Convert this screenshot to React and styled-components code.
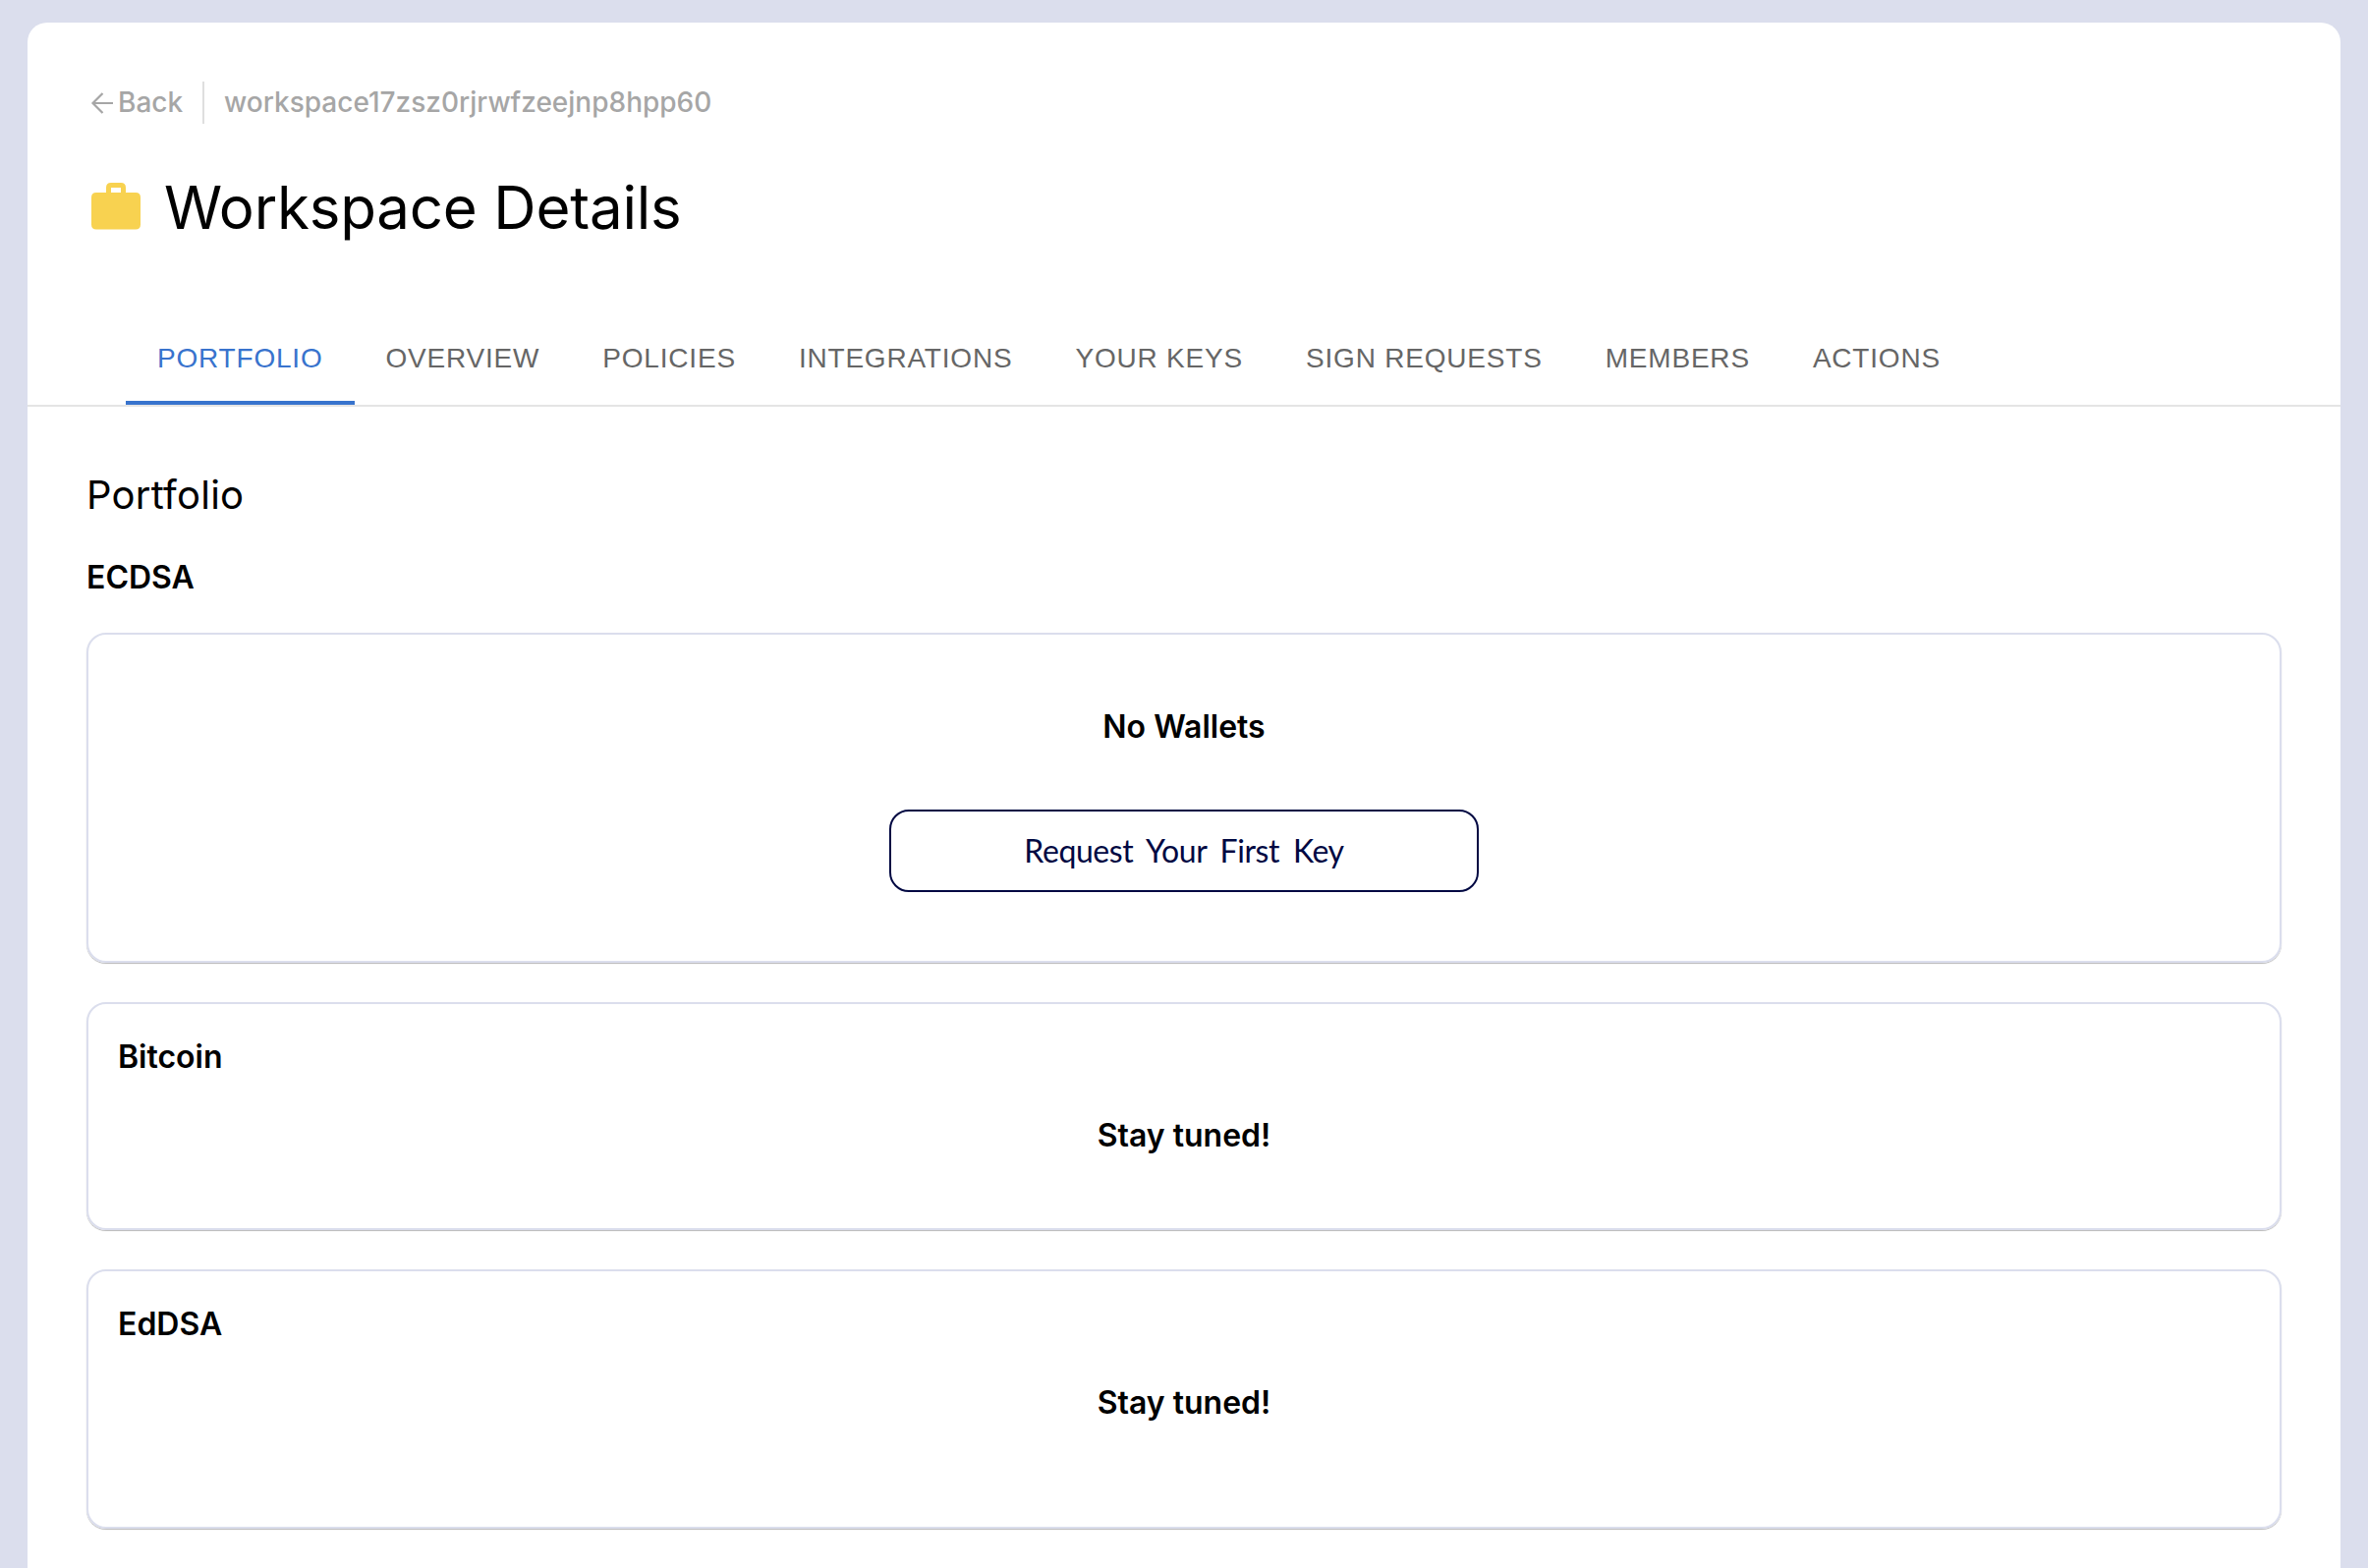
import React from "react";
import styled, { createGlobalStyle } from "styled-components";

const GlobalStyle = createGlobalStyle`
  * { box-sizing: border-box; margin: 0; }
  body {
    margin: 0;
    background: #dbdeed;
    color: #000;
    font-family: Inter, sans-serif;
  }
`;

const Page = styled.div`
  height: 1596px;
  padding: 23px 28px 0;
  overflow: hidden;
`;

const Panel = styled.main`
  height: 1640px;
  background: #fff;
  border-radius: 20px;
`;

const Header = styled.header`
  padding: 60px 60px 0 64px;
`;

const Crumbs = styled.nav`
  display: flex;
  align-items: center;
  height: 43px;
  color: #a6a6a6;
  font-size: 28px;
  font-weight: 500;
  line-height: 40px;
`;

const BackLink = styled.a`
  display: flex;
  align-items: center;
  gap: 4px;
  padding-right: 20px;
`;

const CrumbText = styled.span`
  padding-bottom: 2px;
`;

const WorkspaceId = styled.span`
  display: flex;
  align-items: center;
  height: 43px;
  padding-left: 20px;
  border-left: 2px solid #dfdfdf;
`;

const TitleRow = styled.div`
  display: flex;
  align-items: center;
  height: 80px;
  margin-top: 45px;
`;

const Title = styled.h1`
  margin-left: 23px;
  font-size: 60px;
  font-weight: 400;
  line-height: 80px;
  letter-spacing: -0.2px;
`;

const Tabs = styled.div`
  display: flex;
  height: 98px;
  margin-top: 65px;
  padding-left: 100px;
  border-bottom: 2px solid #e4e4e4;
`;

const Tab = styled.button`
  height: 96px;
  padding: 4px 32px 0;
  border: 0;
  border-bottom: 4px solid ${(p) => (p.$active ? "#3873cd" : "transparent")};
  background: none;
  color: ${(p) => (p.$active ? "#3873cd" : "#666")};
  font: 400 28px/35px "Liberation Sans", sans-serif;
  letter-spacing: 0.8px;
  white-space: nowrap;
`;

const Content = styled.section`
  display: flex;
  flex-direction: column;
  padding: 62px 60px 0;
`;

const SectionTitle = styled.h2`
  font-size: 40px;
  font-weight: 400;
  line-height: 56px;
  letter-spacing: 0.25px;
`;

const Heading = styled.h3`
  font-size: 32px;
  font-weight: 600;
  line-height: 48px;
`;

const GroupHeading = styled(Heading)`
  margin: 32px 0;
`;

const Card = styled.article`
  display: flex;
  flex-direction: column;
  height: ${(p) => p.$height}px;
  margin-bottom: 40px;
  padding: ${(p) => p.$top}px 30px 0;
  border: 2px solid #dbdeed;
  border-radius: 20px;
  box-shadow: 0 1px 1px rgba(0, 0, 0, 0.28);
`;

const Notice = styled.p`
  margin-top: ${(p) => p.$gap || 0}px;
  font-size: 32px;
  font-weight: 600;
  line-height: 48px;
  text-align: center;
`;

const RequestButton = styled.button`
  align-self: center;
  width: 600px;
  height: 84px;
  margin-top: 60px;
  border: 2px solid #000842;
  border-radius: 20px;
  background: #fff;
  color: #000842;
  font: 400 32px/40px Lato, sans-serif;
  letter-spacing: -0.4px;
  word-spacing: 6px;
`;

const tabs = ["PORTFOLIO", "OVERVIEW", "POLICIES", "INTEGRATIONS", "YOUR KEYS", "SIGN REQUESTS", "MEMBERS", "ACTIONS"];

const BackArrow = () => (
  <svg width="24" height="24" viewBox="0 0 24 24" fill="none" stroke="#a6a6a6" strokeWidth="2.2">
    <path d="M23 12H3M12.500 2L2.500 12L12.500 22" />
  </svg>
);

const Briefcase = () => (
  <svg width="52" height="52" viewBox="0 0 52 52" fill="#f8d250">
    <path fillRule="evenodd" d="M6 11H16V6Q16 1 21 1H31Q36 1 36 6V11H46Q51 11 51 16V43.500Q51 48.500 46 48.500H6Q1 48.500 1 43.500V16Q1 11 6 11ZM21 11H31V6H21Z" />
  </svg>
);

export default function App() {
  return (
    <>
      <GlobalStyle />
      <Page>
        <Panel>
          <Header>
            <Crumbs>
              <BackLink><BackArrow /><CrumbText>Back</CrumbText></BackLink>
              <WorkspaceId><CrumbText>workspace17zsz0rjrwfzeejnp8hpp60</CrumbText></WorkspaceId>
            </Crumbs>
            <TitleRow>
              <Briefcase />
              <Title>Workspace Details</Title>
            </TitleRow>
          </Header>
          <Tabs>
            {tabs.map((t, i) => <Tab key={t} $active={i === 0}>{t}</Tab>)}
          </Tabs>
          <Content>
            <SectionTitle>Portfolio</SectionTitle>
            <GroupHeading>ECDSA</GroupHeading>
            <Card $height={336} $top={70}>
              <Notice>No Wallets</Notice>
              <RequestButton>Request Your First Key</RequestButton>
            </Card>
            <Card $height={232} $top={30}>
              <Heading>Bitcoin</Heading>
              <Notice $gap={32}>Stay tuned!</Notice>
            </Card>
            <Card $height={264} $top={30}>
              <Heading>EdDSA</Heading>
              <Notice $gap={32}>Stay tuned!</Notice>
            </Card>
          </Content>
        </Panel>
      </Page>
    </>
  );
}
